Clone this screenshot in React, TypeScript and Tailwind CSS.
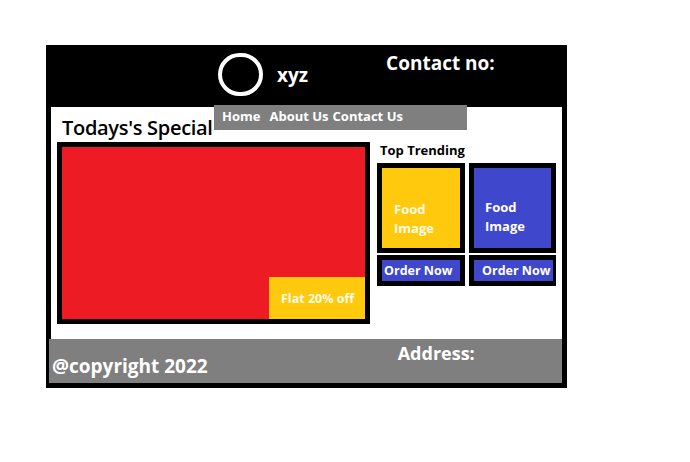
import React from "react";

export default function App() {
  return (
    <div className="w-[690px] h-[462px] bg-white pt-[45px] pl-[46px] font-['Open_Sans',sans-serif]">
      <div className="w-[521px] h-[343px] bg-black flex flex-col">
        {/* Header */}
        <div className="h-[60px] flex items-start shrink-0">
          <div className="ml-[172px] mt-[8px] w-[45px] h-[43px] rounded-full border-[4px] border-white" />
          <div className="ml-[14px] mt-[18px] text-white font-bold text-[19px] leading-[24px]">xyz</div>
          <div className="ml-[78px] mt-[6px] text-white font-bold text-[19px] leading-[24px]">Contact no:</div>
        </div>
        {/* Content */}
        <div className="mx-[5px] h-[234px] bg-white border-t-[2px] border-black flex flex-col shrink-0">
          <div className="h-[35px] flex items-start shrink-0">
            <div className="w-[163px] pl-[11px] pt-[9px] text-black font-semibold text-[20px] leading-[24px] whitespace-nowrap tracking-[-0.3px]">
              Todays's Special
            </div>
            <div className="-mt-[2px] w-[253px] h-[25px] bg-[#7f7f7f] flex items-center pb-[3px] text-white font-bold text-[13px] leading-[16px] whitespace-nowrap">
              <span className="ml-[8px]">Home</span>
              <span className="ml-[9px]">About Us</span>
              <span className="ml-[4px]">Contact Us</span>
            </div>
          </div>
          <div className="flex items-start pl-[6px]">
            <div className="w-[313px] h-[182px] border-[5px] border-black bg-[#ed1c24] flex items-end justify-end shrink-0">
              <div className="w-[96px] h-[42px] bg-[#ffc90e] flex items-center pl-[12px] pt-[1px] text-[#fffbe8] font-bold text-[12.5px] leading-[16px] whitespace-nowrap">
                Flat 20% off
              </div>
            </div>
            <div className="ml-[7px] flex flex-col">
              <div className="pl-[3px] h-[16px] text-black font-bold text-[13px] leading-[16px] whitespace-nowrap">Top Trending</div>
              <div className="mt-[5px] flex gap-[4px]">
                <div className="flex flex-col">
                  <div className="w-[88px] h-[90px] border-[5px] border-black bg-[#ffc90e] pl-[12px] pt-[32px] text-[#fffbe8] font-bold text-[13px] leading-[19px]">
                    <div>Food</div>
                    <div>Image</div>
                  </div>
                  <div className="mt-[2px] w-[88px] h-[31px] border-[5px] border-black bg-[#3f48cc] pl-[2px] flex items-center text-white font-bold text-[12.5px] leading-[16px] whitespace-nowrap overflow-hidden">
                    Order Now
                  </div>
                </div>
                <div className="flex flex-col">
                  <div className="w-[87px] h-[90px] border-[5px] border-black bg-[#3f48cc] pl-[11px] pt-[30px] text-white font-bold text-[13px] leading-[19px]">
                    <div>Food</div>
                    <div>Image</div>
                  </div>
                  <div className="mt-[2px] w-[87px] h-[31px] border-[5px] border-black border-r-[3px] bg-[#3f48cc] pl-[8px] flex items-center text-white font-bold text-[12.5px] leading-[16px] whitespace-nowrap overflow-hidden">
                    Order Now
                  </div>
                </div>
              </div>
            </div>
          </div>
        </div>
        {/* Footer */}
        <div className="ml-[3px] mr-[5px] h-[44px] bg-[#7f7f7f] flex items-start shrink-0">
          <div className="ml-[3px] mt-[15px] text-white font-bold text-[19px] leading-[24px] whitespace-nowrap">@copyright 2022</div>
          <div className="ml-[190px] mt-[2px] text-white font-bold text-[18px] leading-[24px] whitespace-nowrap">Address:</div>
        </div>
      </div>
    </div>
  );
}
